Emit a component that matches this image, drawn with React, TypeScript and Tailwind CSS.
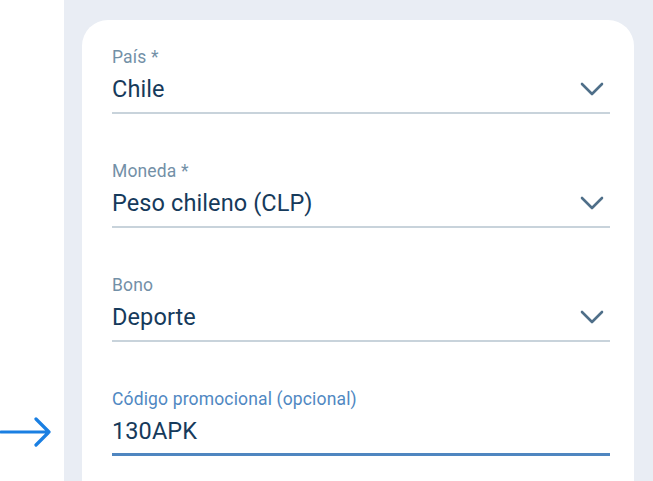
import React from "react";

type Field = { label: string; value: string; select?: boolean; focused?: boolean };

const fields: Field[] = [
  { label: "País *", value: "Chile", select: true },
  { label: "Moneda *", value: "Peso chileno (CLP)", select: true },
  { label: "Bono", value: "Deporte", select: true },
  { label: "Código promocional (opcional)", value: "130APK", focused: true },
];

function Chevron() {
  return (
    <svg width="26" height="16" viewBox="0 0 26 16" fill="none">
      <polyline
        points="3,3 13,13 23,3"
        stroke="#4f6f89"
        strokeWidth="2.6"
        strokeLinecap="round"
        strokeLinejoin="round"
      />
    </svg>
  );
}

function Arrow() {
  return (
    <svg width="54" height="30" viewBox="0 0 54 30" fill="none">
      <path
        d="M1 15H49M36 2l13 13-13 13"
        stroke="#1a7fe2"
        strokeWidth="3.2"
        strokeLinecap="round"
        strokeLinejoin="round"
      />
    </svg>
  );
}

function FormField({ label, value, select, focused }: Field) {
  return (
    <div className="flex flex-col">
      <div
        className={`text-[17.5px] leading-6 tracking-[0.15px] ${focused ? "text-[#5088c2]" : "text-[#7390a7]"}`}
      >
        {label}
      </div>
      <div
        className={`mt-[6px] flex items-center justify-between pr-[5px] ${
          focused ? "pb-[8px] border-b-[3px] border-[#4f86c0]" : "pb-[9px] border-b-2 border-[#c8d3db]"
        }`}
      >
        <span className="text-[23.5px] leading-7 tracking-[0.1px] text-[#163a5b]">{value}</span>
        {select && <Chevron />}
      </div>
    </div>
  );
}

export default function App() {
  return (
    <div
      className="flex h-[481px] w-[653px] overflow-hidden bg-white"
      style={{ fontFamily: "Roboto, 'Noto Sans', sans-serif" }}
    >
      <div className="w-[64px] shrink-0 pt-[417px]">
        <Arrow />
      </div>
      <div className="flex-1 bg-[#e9edf4] pl-[18px] pr-[19px] pt-5">
        <div className="flex h-full flex-col gap-[45px] rounded-t-[26px] bg-white pl-[30px] pr-[24px] pt-[25px]">
          {fields.map((f) => (
            <FormField key={f.label} {...f} />
          ))}
        </div>
      </div>
    </div>
  );
}
